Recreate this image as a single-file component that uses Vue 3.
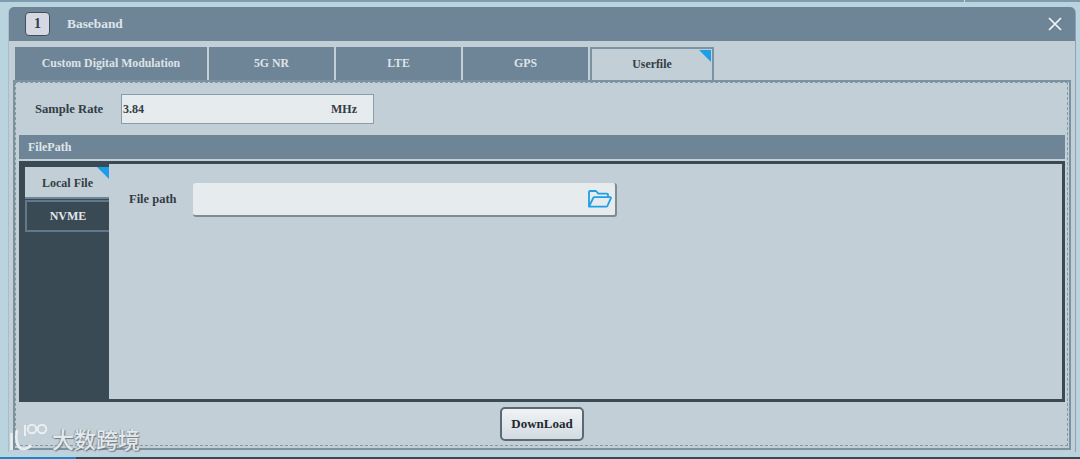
<script setup>
const tabs = [
  { label: 'Custom Digital Modulation', cls: 'w1' },
  { label: '5G NR', cls: 'w2' },
  { label: 'LTE', cls: 'w2' },
  { label: 'GPS', cls: 'w2' },
  { label: 'Userfile', cls: 'w3 active' },
]
</script>

<template>
  <div class="screen">
    <div class="top-strip"><span class="top-split"></span></div>
    <section class="window">
      <header class="title-bar">
        <span class="badge">1</span>
        <span class="title">Baseband</span>
        <svg class="close" width="16" height="16" viewBox="0 0 16 16">
          <path d="M2 2 L14 14 M14 2 L2 14" stroke="#f2f5f7" stroke-width="1.7" fill="none" />
        </svg>
      </header>
      <div class="body">
        <nav class="tabs">
          <div v-for="t in tabs" :key="t.label" class="tab" :class="t.cls">
            {{ t.label }}
            <i v-if="t.cls.includes('active')" class="corner"></i>
          </div>
        </nav>
        <div class="panel">
          <div class="dashed">
            <div class="rate-row">
              <span class="rate-label">Sample Rate</span>
              <div class="rate-input"><span>3.84</span><span>MHz</span></div>
            </div>
            <div class="section-bar">FilePath</div>
            <div class="split">
              <aside class="side">
                <div class="side-item current">Local File<i class="corner"></i></div>
                <div class="side-item">NVME</div>
              </aside>
              <div class="content">
                <span class="path-label">File path</span>
                <div class="path-input">
                  <svg width="24" height="18" viewBox="0 0 24 18" fill="none" stroke="#1f9fe6" stroke-width="1.8" stroke-linejoin="round">
                    <path d="M1 16.6 V2 Q1 1 2 1 H8 L10.3 3.6 H19 Q20 3.6 20 4.6 V7" />
                    <path d="M1 16.6 L5.2 8 Q5.6 7.2 6.5 7.2 H22 Q23.3 7.2 22.8 8.4 L19.4 15.8 Q19 16.6 18 16.6 Z" />
                  </svg>
                </div>
              </div>
            </div>
            <div class="actions"><button class="download">DownLoad</button></div>
          </div>
        </div>
      </div>
    </section>
    <div class="bottom-strip"></div>
    <div class="watermark">
      <svg width="44" height="32" viewBox="0 0 44 32" fill="none" stroke="#eef2f4" stroke-width="2">
        <path d="M3.5 11 V28" stroke-width="2.6" />
        <path d="M9 8 C7 17 9 27 15 27 C18 27 21 26 23 23" stroke-width="2.6" />
        <path d="M17 3 V14" />
        <circle cx="24" cy="7" r="4.2" />
        <circle cx="34" cy="7" r="4.2" />
      </svg>
      <span class="wm-text">大数跨境</span>
    </div>
  </div>
</template>

<style>
html, body { margin: 0; background: #b9d3df; }
</style>

<style scoped>
.screen {
  position: relative;
  width: 1080px;
  height: 459px;
  overflow: hidden;
  background: #b9d3df;
  font-family: "Liberation Serif", "Noto Sans CJK SC", serif;
  font-weight: 700;
  font-size: 12px;
  display: flex;
  flex-direction: column;
}
.top-strip {
  height: 2px;
  flex: none;
  background: #7e9cb0;
  margin-bottom: 5px;
  position: relative;
}
.top-split {
  position: absolute;
  left: 964px;
  top: 0;
  width: 1px;
  height: 2px;
  background: #d3e2ea;
}
.window {
  flex: none;
  height: 445px;
  margin: 0 4px 0 8px;
  display: flex;
  flex-direction: column;
  background: #c3cfd6;
  border-radius: 6px 6px 0 0;
  border-right: 1px solid #8ea3b1;
  border-left: 1px solid #a9bdc9;
  box-sizing: border-box;
}
.title-bar {
  flex: none;
  height: 34px;
  background: #6e8598;
  border-radius: 5px 5px 0 0;
  display: flex;
  align-items: center;
  padding: 0 12px 0 16px;
  color: #dfe5e9;
}
.badge {
  width: 25px;
  height: 24px;
  box-sizing: border-box;
  border: 1px solid #414f5b;
  border-radius: 4px;
  background: #d5d8e2;
  color: #333d45;
  font-size: 14px;
  display: flex;
  align-items: center;
  justify-content: center;
}
.title {
  margin-left: 17px;
  font-size: 13.4px;
  flex: 1;
}
.close { flex: none; }
.body {
  flex: 1;
  display: flex;
  flex-direction: column;
  padding: 6px 4px 2px 4px;
  min-height: 0;
}
.tabs {
  display: flex;
  gap: 2px;
  height: 33px;
  flex: none;
  padding-left: 2px;
}
.tab {
  position: relative;
  height: 33px;
  box-sizing: border-box;
  background: #6e8598;
  color: #dde3e7;
  display: flex;
  align-items: center;
  justify-content: center;
  font-size: 11.8px;
}
.w1 { width: 192px; }
.w2 { width: 125px; }
.w3 { width: 124px; }
.tab.active {
  background: #c3cfd6;
  color: #333d45;
  border: 2px solid #7b92a3;
  border-bottom: none;
}
.corner {
  position: absolute;
  top: 1px;
  right: 1px;
  width: 0;
  height: 0;
  border-top: 12px solid #1c9fe8;
  border-left: 12px solid transparent;
}
.panel {
  flex: 1;
  min-height: 0;
  border: 2px solid #7b92a3;
  display: flex;
  box-sizing: border-box;
}
.dashed {
  flex: 1;
  min-width: 0;
  border: 1px dashed #8b979f;
  margin: 0 1px 2px 0;
  padding: 0 2px 0 3px;
  display: flex;
  flex-direction: column;
  box-sizing: border-box;
}
.rate-row {
  display: flex;
  align-items: center;
  height: 30px;
  margin-top: 11px;
  flex: none;
}
.rate-label {
  width: 102px;
  padding-left: 16px;
  box-sizing: border-box;
  color: #333d45;
  font-size: 12.6px;
}
.rate-input {
  width: 253px;
  height: 30px;
  box-sizing: border-box;
  background: #e6ebee;
  border: 1px solid #8a9ca9;
  display: flex;
  justify-content: space-between;
  align-items: center;
  padding: 0 16px 0 1px;
  color: #333d45;
  font-size: 12px;
}
.section-bar {
  margin-top: 11px;
  flex: none;
  height: 24px;
  background: #6e8598;
  color: #dfe5e9;
  display: flex;
  align-items: center;
  padding-left: 9px;
}
.split {
  margin-top: 2px;
  flex: none;
  height: 241px;
  box-sizing: border-box;
  border: 3px solid #3a4a55;
  background: #3a4a55;
  display: flex;
}
.side {
  width: 87px;
  flex: none;
  padding: 3px 0 0 3px;
  box-sizing: border-box;
  display: flex;
  flex-direction: column;
}
.side-item {
  position: relative;
  height: 32px;
  box-sizing: border-box;
  display: flex;
  align-items: center;
  justify-content: center;
  color: #e2e7ea;
  border: 2px solid #61788a;
  border-right: none;
  font-size: 12px;
}
.side-item.current {
  height: 32px;
  padding: 2px 0 0 1px;
  background: #c3cfd6;
  color: #333d45;
  border: none;
  border-bottom: 2px solid #6e8598;
  margin-bottom: 1px;
}
.side-item .corner { top: 0; right: 0; }
.content {
  flex: 1;
  background: #c3cfd6;
  display: flex;
  align-items: flex-start;
  padding: 19px 0 0 20px;
}
.path-label {
  width: 64px;
  height: 34px;
  display: flex;
  align-items: center;
  color: #333d45;
  font-size: 12.5px;
  line-height: 1;
  padding-bottom: 1px;
  box-sizing: border-box;
}
.path-input {
  width: 424px;
  height: 34px;
  box-sizing: border-box;
  background: #e6ebee;
  border-radius: 3px;
  border-bottom: 2px solid #7f8b93;
  border-right: 2px solid #7f8b93;
  display: flex;
  align-items: center;
  justify-content: flex-end;
  padding-right: 3px;
}
.actions {
  flex: none;
  display: flex;
  justify-content: center;
  padding-top: 5px;
}
.download {
  width: 84px;
  height: 34px;
  border: 2px solid #5a6a75;
  border-radius: 5px;
  background: linear-gradient(#f0f3f5, #d3dbe1);
  font: inherit;
  font-size: 13px;
  color: #1f2830;
  padding: 0;
}
.bottom-strip {
  flex: none;
  height: 2px;
  margin-top: 5px;
  background: linear-gradient(to right, #1c86c6 0 76px, #3a4a55 76px);
}
.watermark {
  position: absolute;
  left: 8px;
  top: 422px;
  display: flex;
  align-items: center;
  opacity: 0.92;
}
.wm-text {
  font-family: "Noto Sans CJK SC", sans-serif;
  font-weight: 500;
  font-size: 22px;
  margin-left: 0;
  color: #e6ecef;
  text-shadow: 1px 1px 1px #69747c, -1px 0 1px #8b969d;
}
</style>
